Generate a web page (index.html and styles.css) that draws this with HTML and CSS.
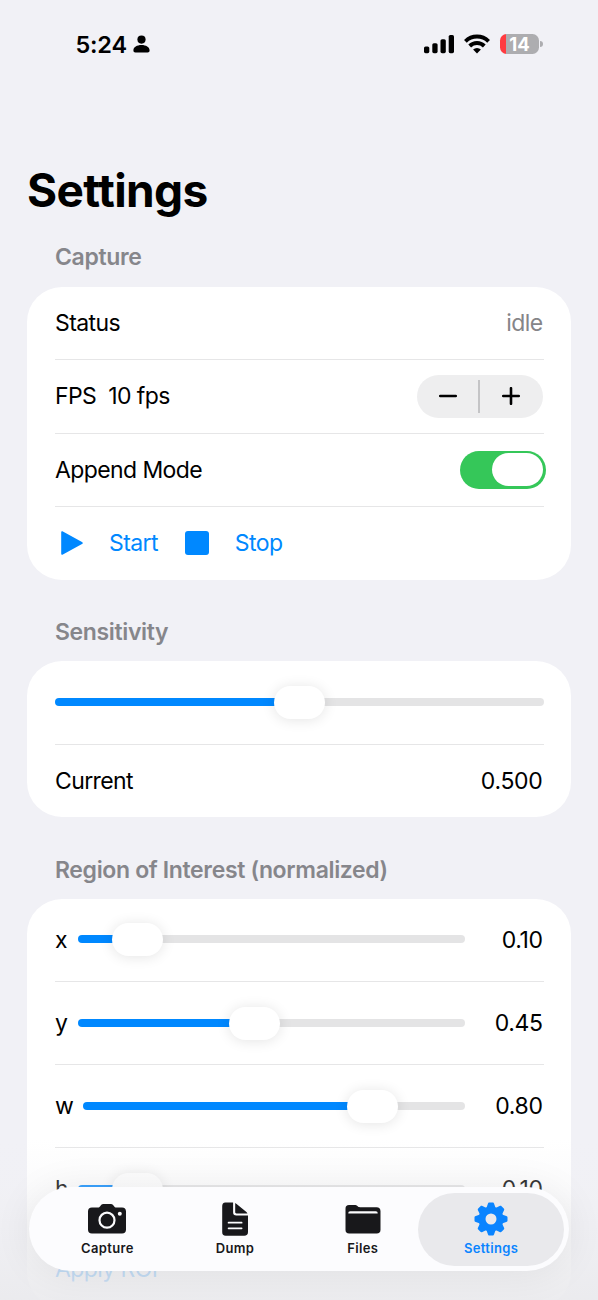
FILE: index.html
```html
<!DOCTYPE html>
<html lang="en">
<head>
    <meta charset="UTF-8">
    <meta name="viewport" content="width=device-width, initial-scale=1.0">
    <title>Settings</title>
    <link rel="stylesheet" href="styles.css">
</head>
<body>
    <div class="screen">
        <header class="status-bar">
            <div class="status-left">
                <span class="time">5:24</span>
                <svg class="person" width="17" height="18" viewBox="0 0 17 18">
                    <circle cx="8.5" cy="4.6" r="4.1"/>
                    <path d="M.4 15.2C.4 12 4 9.900 8.500 9.900s8.100 2.100 8.100 5.300c0 1.500-.7 2.200-2 2.200H2.400c-1.300 0-2-.7-2-2.200z"/>
                </svg>
            </div>
            <div class="status-right">
                <svg width="30" height="20" viewBox="0 0 30 20">
                    <rect x="0" y="12.400" width="5.300" height="6.800" rx="1.600"/>
                    <rect x="8.300" y="9.200" width="5.300" height="10" rx="1.600"/>
                    <rect x="16.500" y="5.200" width="5.300" height="14" rx="1.600"/>
                    <rect x="24.700" y="1" width="5.300" height="18.200" rx="1.600"/>
                </svg>
                <svg width="26" height="20" viewBox="0 0 26 20">
                    <g fill="none" stroke="#000" stroke-width="3.900">
                        <path d="M1.400 7.300a16.600 16.600 0 0 1 23.200 0"/>
                        <path d="M5.700 12a10.400 10.400 0 0 1 14.600 0"/>
                    </g>
                    <path d="M13 19.400l-3.900-3.900a5.500 5.500 0 0 1 7.800 0z"/>
                </svg>
                <div class="battery"><span>14</span></div>
            </div>
        </header>

        <h1>Settings</h1>

        <h2>Capture</h2>
        <section class="card">
            <div class="row">
                <span>Status</span>
                <span class="muted">idle</span>
            </div>
            <div class="row">
                <span class="fps-label">FPS<span>10 fps</span></span>
                <div class="stepper">
                    <svg width="18" height="18" viewBox="0 0 18 18"><path d="M1.200 9h15.600"/></svg>
                    <i></i>
                    <svg width="18" height="18" viewBox="0 0 18 18"><path d="M1.200 9h15.600M9 1.200v15.600"/></svg>
                </div>
            </div>
            <div class="row">
                <span>Append Mode</span>
                <div class="toggle"><div class="toggle-knob"></div></div>
            </div>
            <div class="row actions">
                <svg width="24" height="26" viewBox="0 0 24 26"><path d="M1.200 2.500v21c0 1.200.8 1.500 1.700 1L22 14.100c1-.6 1-1.600 0-2.200L2.900 1.500c-.9-.5-1.700-.2-1.700 1z"/></svg>
                <span class="start">Start</span>
                <div class="stop-icon"></div>
                <span>Stop</span>
            </div>
        </section>

        <h2>Sensitivity</h2>
        <section class="card">
            <div class="row slider-row">
                <div class="slider" style="--value: 0.5"><div class="track"></div><div class="thumb"></div></div>
            </div>
            <div class="row">
                <span>Current</span>
                <span class="number">0.500</span>
            </div>
        </section>

        <h2>Region of Interest (normalized)</h2>
        <section class="card">
            <div class="row slider-row">
                <span class="axis">x</span>
                <div class="slider" style="--value: 0.1"><div class="track"></div><div class="thumb"></div></div>
                <span class="value">0.10</span>
            </div>
            <div class="row slider-row">
                <span class="axis">y</span>
                <div class="slider" style="--value: 0.45"><div class="track"></div><div class="thumb"></div></div>
                <span class="value">0.45</span>
            </div>
            <div class="row slider-row">
                <span class="axis wide">w</span>
                <div class="slider" style="--value: 0.8"><div class="track"></div><div class="thumb"></div></div>
                <span class="value">0.80</span>
            </div>
            <div class="row slider-row">
                <span class="axis">h</span>
                <div class="slider" style="--value: 0.1"><div class="track"></div><div class="thumb"></div></div>
                <span class="value">0.10</span>
            </div>
            <div class="row apply">Apply ROI</div>
        </section>
    </div>

    <div class="fade"></div>

    <nav class="tab-bar">
        <div class="tab">
            <svg width="38" height="34" viewBox="0 0 38 34">
                <path d="M4 5.500h6c1 0 1.500-.4 2.200-1.300l.9-1.100C13.900 2.200 14.700 2 15.800 2h6.600c1.100 0 1.900.2 2.700 1.100l.9 1.100c.7.900 1.200 1.300 2.200 1.300H34c2.700 0 4 1.300 4 4v18c0 2.700-1.300 4-4 4H4c-2.700 0-4-1.300-4-4v-18c0-2.700 1.300-4 4-4z"/>
                <circle cx="19" cy="18.200" r="7.500" fill="none" stroke="#fcfcfe" stroke-width="2.200"/>
                <circle cx="31.800" cy="11.700" r="2" fill="#fcfcfe"/>
            </svg>
            <span>Capture</span>
        </div>
        <div class="tab">
            <svg width="28" height="34" viewBox="0 0 28 34">
                <path d="M4.400.5h7.700v9.700c0 2.300 1 3.300 3.300 3.300H27V30c0 2.500-1.300 3.800-3.800 3.800H4.800C2.200 33.800 1.200 32.500 1.200 30V4.300C1.200 1.800 2.200.5 4.400.5z"/>
                <path d="M14.200.9c.5.200.9.500 1.400 1l9.800 8.100c.5.500.8.900 1 1.400H15.600c-1 0-1.400-.4-1.400-1.400z"/>
                <path d="M7.600 20.700h13M7.600 26.300h13" fill="none" stroke="#fcfcfe" stroke-width="1.800" stroke-linecap="round"/>
            </svg>
            <span>Dump</span>
        </div>
        <div class="tab">
            <svg width="36" height="34" viewBox="0 0 36 34">
                <path d="M4 3h5.500c1.400 0 2 .3 2.900 1.100.8.800 1.400 1.200 2.600 1.200h16.500c2.600 0 4 1.300 4 3.900v18.500c0 2.500-1.300 3.800-3.800 3.800H4.200c-2.500 0-3.700-1.300-3.700-3.800V6.700C.5 4.200 1.700 3 4 3z"/>
                <path d="M3.300 11.500c0-1.500.6-2.300 2-2.300h25.400c1.400 0 2 .8 2 2.300z" fill="#fcfcfe"/>
            </svg>
            <span>Files</span>
        </div>
        <div class="tab active">
            <svg width="34" height="34" viewBox="-17 -17 34 34">
                <defs>
                    <path id="tooth" d="M-4.600-11l1.500-4.200c.3-.9.700-1.300 1.500-1.300h3.200c.8 0 1.200.4 1.500 1.300L4.600-11z"/>
                </defs>
                <circle r="9" fill="none" stroke="#0a84ff" stroke-width="7"/>
                <use href="#tooth"/>
                <use href="#tooth" transform="rotate(45)"/>
                <use href="#tooth" transform="rotate(90)"/>
                <use href="#tooth" transform="rotate(135)"/>
                <use href="#tooth" transform="rotate(180)"/>
                <use href="#tooth" transform="rotate(225)"/>
                <use href="#tooth" transform="rotate(270)"/>
                <use href="#tooth" transform="rotate(315)"/>
            </svg>
            <span>Settings</span>
        </div>
    </nav>
</body>
</html>
```
FILE: styles.css
```css
* {
    box-sizing: border-box;
}

body {
    margin: 0;
    height: 1300px;
    overflow: hidden;
    background: #f1f1f6;
    color: #000;
    font-family: Inter, "Liberation Sans", sans-serif;
    font-size: 23px;
    letter-spacing: -0.6px;
}

.screen {
    height: 1300px;
    padding: 0 27px;
    overflow: hidden;
}

svg {
    display: block;
    flex: none;
}

/* Status bar */
.status-bar {
    display: flex;
    justify-content: space-between;
    height: 88px;
    padding: 0 28px 0 48.5px;
}

.status-left,
.status-right {
    display: flex;
    align-items: center;
}

.status-left {
    gap: 6px;
}

.status-right {
    gap: 10px;
}

.time {
    font-size: 23.5px;
    font-weight: 600;
    letter-spacing: -0.2px;
}

.battery {
    position: relative;
    width: 39px;
    height: 20px;
    margin-right: 4px;
    border-radius: 6.5px;
    background: linear-gradient(90deg, #ff3b40 5.5px, #adadb0 5.5px);
    color: #fff;
    font-size: 18.5px;
    font-weight: 700;
    line-height: 20px;
    letter-spacing: 0;
    text-align: center;
}

.battery::after {
    content: "";
    position: absolute;
    right: -3.5px;
    top: 7px;
    width: 2.5px;
    height: 6px;
    border-radius: 0 3px 3px 0;
    background: #adadb0;
}

h1 {
    margin: 74px 0 0;
    font-size: 46px;
    line-height: 56px;
    font-weight: 700;
    letter-spacing: -0.6px;
}

h2 {
    margin: 37.5px 28px 14px;
    font-size: 23px;
    line-height: 30px;
    font-weight: 600;
    letter-spacing: -0.35px;
    color: #86868b;
}

h1 + h2 {
    margin: 24px 28px 15px;
}

/* Cards */
.card {
    width: 543.5px;
    padding: 0 27px 0 28px;
    border-radius: 35px;
    background: #fff;
}

.row {
    display: flex;
    align-items: center;
    justify-content: space-between;
    height: 73.5px;
    padding-right: 1px;
}

.row:first-child {
    height: 72px;
}

.row + .row {
    border-top: 1.5px solid #e6e6e7;
}

.muted {
    color: #858588;
}

.fps-label {
    display: flex;
    gap: 12px;
}

.stepper {
    display: flex;
    align-items: center;
    justify-content: space-between;
    width: 126px;
    height: 43px;
    padding: 0 23px 0 22px;
    border-radius: 22px;
    background: #eeeeef;
}

.stepper i {
    width: 1.5px;
    height: 33px;
    background: #c4c4c6;
}

.stepper path {
    fill: none;
    stroke: #000;
    stroke-width: 2.6;
    stroke-linecap: round;
}

.toggle {
    display: flex;
    justify-content: flex-end;
    width: 86px;
    height: 38px;
    margin-right: -3px;
    padding: 2.5px;
    border-radius: 19px;
    background: #35c759;
}

.toggle-knob {
    width: 51px;
    height: 33px;
    border-radius: 17px;
    background: #fff;
}

.actions {
    justify-content: flex-start;
    padding-left: 4.5px;
    color: #0088ff;
}

.actions path {
    fill: #0088ff;
}

.start {
    margin: 0 27px 0 25.5px;
}

.stop-icon {
    width: 24px;
    height: 24px;
    margin-right: 26px;
    border-radius: 3px;
    background: #0088ff;
}

/* Sliders */
.row.slider-row {
    height: 83px;
    padding-right: 0;
}

.row.slider-row:first-child {
    height: 82.5px;
}

.slider {
    position: relative;
    flex: 1;
    height: 33px;
    padding: 12px 0 13px;
}

.track {
    height: 8px;
    border-radius: 4px;
    background: linear-gradient(90deg, #0088ff calc(var(--value) * 100%), #e4e4e5 calc(var(--value) * 100%));
}

.thumb {
    position: absolute;
    top: 0;
    left: calc(var(--value) * (100% - 51px));
    width: 51px;
    height: 33px;
    border-radius: 17px;
    background: #fff;
    box-shadow: 0 1px 14px rgba(0, 0, 0, 0.11);
}

.axis {
    width: 23px;
}

.axis.wide {
    width: 28px;
}

.number {
    letter-spacing: -0.3px;
}

.value {
    width: 79px;
    padding-right: 1px;
    text-align: right;
    letter-spacing: -0.4px;
}

.apply {
    height: 77px;
    color: #0088ff;
}

.fade {
    position: absolute;
    left: 0;
    top: 1140px;
    width: 100%;
    height: 160px;
    background: linear-gradient(rgba(241, 241, 244, 0), rgba(240, 240, 243, 0.25) 30%, rgba(236, 236, 239, 0.8) 80%, rgba(234, 234, 237, 0.9));
}

/* Tab bar */
.tab-bar {
    position: absolute;
    left: 29px;
    top: 1187px;
    display: flex;
    width: 540px;
    height: 84px;
    padding: 5.5px;
    border-radius: 42px;
    background: #fcfcfe;
    box-shadow: 0 2px 40px rgba(0, 0, 0, 0.07);
}

.tab {
    display: flex;
    flex: none;
    flex-direction: column;
    align-items: center;
    width: 127.7px;
    padding-top: 9.5px;
    font-size: 13px;
    line-height: 16px;
    font-weight: 600;
    letter-spacing: 0.35px;
    color: #18181b;
}

.tab:first-child {
    margin-left: 9px;
}

.tab svg {
    margin-bottom: 3.5px;
    fill: #18181b;
}

.tab.active {
    width: 146px;
    height: 73px;
    margin-left: -8.5px;
    border-radius: 37px;
    background: #e9e9ec;
    color: #0a84ff;
}

.tab.active svg {
    fill: #0a84ff;
}
```
